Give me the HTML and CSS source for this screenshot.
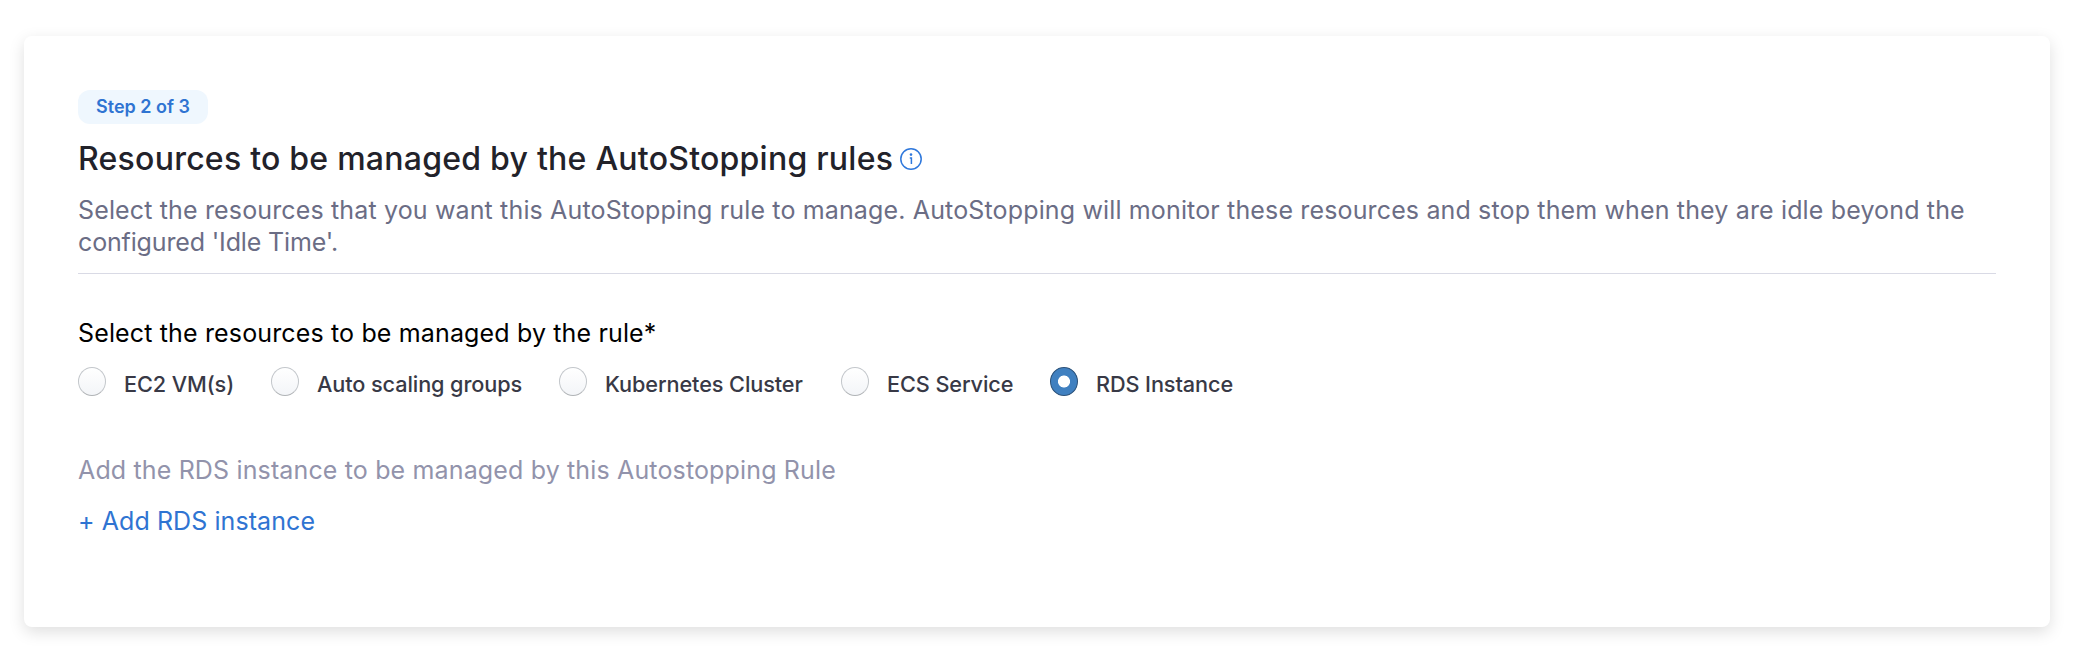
FILE: index.html
```html
<!DOCTYPE html>
<html lang="en">
<head>
<meta charset="utf-8">
<title>AutoStopping rules</title>
<link rel="stylesheet" href="styles.css">
</head>
<body>
<main class="card">
  <div class="step">Step 2 of 3</div>
  <h1 class="title"><span>Resources to be managed by the AutoStopping rules</span>
    <svg class="info" viewBox="0 0 22 22" fill="none" stroke="#2f78dc" stroke-width="1.5"><circle cx="11" cy="11" r="10.2"/><path d="M9.8 9.9h1.6v6"/><circle cx="11" cy="6.6" r="1.3" fill="#2f78dc" stroke="none"/></svg>
  </h1>
  <p class="intro">Select the resources that you want this AutoStopping rule to manage. AutoStopping will monitor these resources and stop them when they are idle beyond the<br><span class="tail">configured 'Idle Time'.</span></p>
  <hr class="rule">
  <h2 class="question">Select the resources to be managed by the rule*</h2>
  <div class="options">
    <label class="option"><span class="radio"></span><span class="name">EC2 VM(s)</span></label>
    <label class="option"><span class="radio"></span><span class="name">Auto scaling groups</span></label>
    <label class="option"><span class="radio"></span><span class="name">Kubernetes Cluster</span></label>
    <label class="option"><span class="radio"></span><span class="name">ECS Service</span></label>
    <label class="option"><span class="radio checked"></span><span class="name">RDS Instance</span></label>
  </div>
  <p class="hint">Add the RDS instance to be managed by this Autostopping Rule</p>
  <a class="add">+ Add RDS instance</a>
</main>
</body>
</html>
```

FILE: styles.css
```css
* { box-sizing: border-box; }
body { margin: 0; padding: 36px 28px 0 24px; height: 656px; background: #fff; font-family: Inter, sans-serif; overflow: hidden; }
.card { height: 591px; padding: 54px 54px 0; border-radius: 8px; background: #fff; box-shadow: 0 5px 16px rgba(0,0,0,.13); display: flex; flex-direction: column; align-items: flex-start; white-space: nowrap; }
.step { height: 34px; width: 130px; line-height: 34px; text-align: center; border-radius: 12px; background: #eff7fe; color: #2f74d2; font-size: 18px; font-weight: 600; }
.title { display: flex; align-items: center; gap: 7px; margin: 14px 0 0; height: 40px; font-size: 32px; font-weight: 500; letter-spacing: .245px; color: #22222a; }
.info { width: 22px; height: 22px; margin-top: 2px; }
.intro { margin: 16px 0 0; font-size: 25px; line-height: 32px; letter-spacing: .147px; color: #6b6d85; }
.tail { letter-spacing: -.15px; }
.rule { width: 100%; height: 1px; border: 0; margin: 15px 0 0; background: #d9dae5; }
.question { margin: 42px 0 0; font-size: 25px; line-height: 34px; letter-spacing: .147px; font-weight: 400; color: #000; }
.options { display: grid; grid-template-columns: 193px 288px 282px 209px auto; margin-top: 15px; }
.option { display: flex; align-items: center; gap: 18px; height: 34px; }
.radio { width: 28px; height: 29px; margin-top: -2px; border-radius: 50%; border: 1px solid #c3c7cb; border-bottom-color: #b0b3b6; background: linear-gradient(#fff, #f3f5f8); }
.checked { border-color: #2a5078; background: radial-gradient(circle, #fff 5.6px, transparent 6.4px), linear-gradient(#4080c0, #4080c0); }
.name { margin-top: 3px; font-size: 21.7px; font-weight: 500; letter-spacing: -.1px; color: #383946; }
.hint { margin: 54px 0 0; font-size: 25px; line-height: 34px; letter-spacing: .147px; color: #9293ab; }
.add { margin-top: 17px; font-size: 25px; line-height: 34px; letter-spacing: .08px; color: #2f74d2; }
```
